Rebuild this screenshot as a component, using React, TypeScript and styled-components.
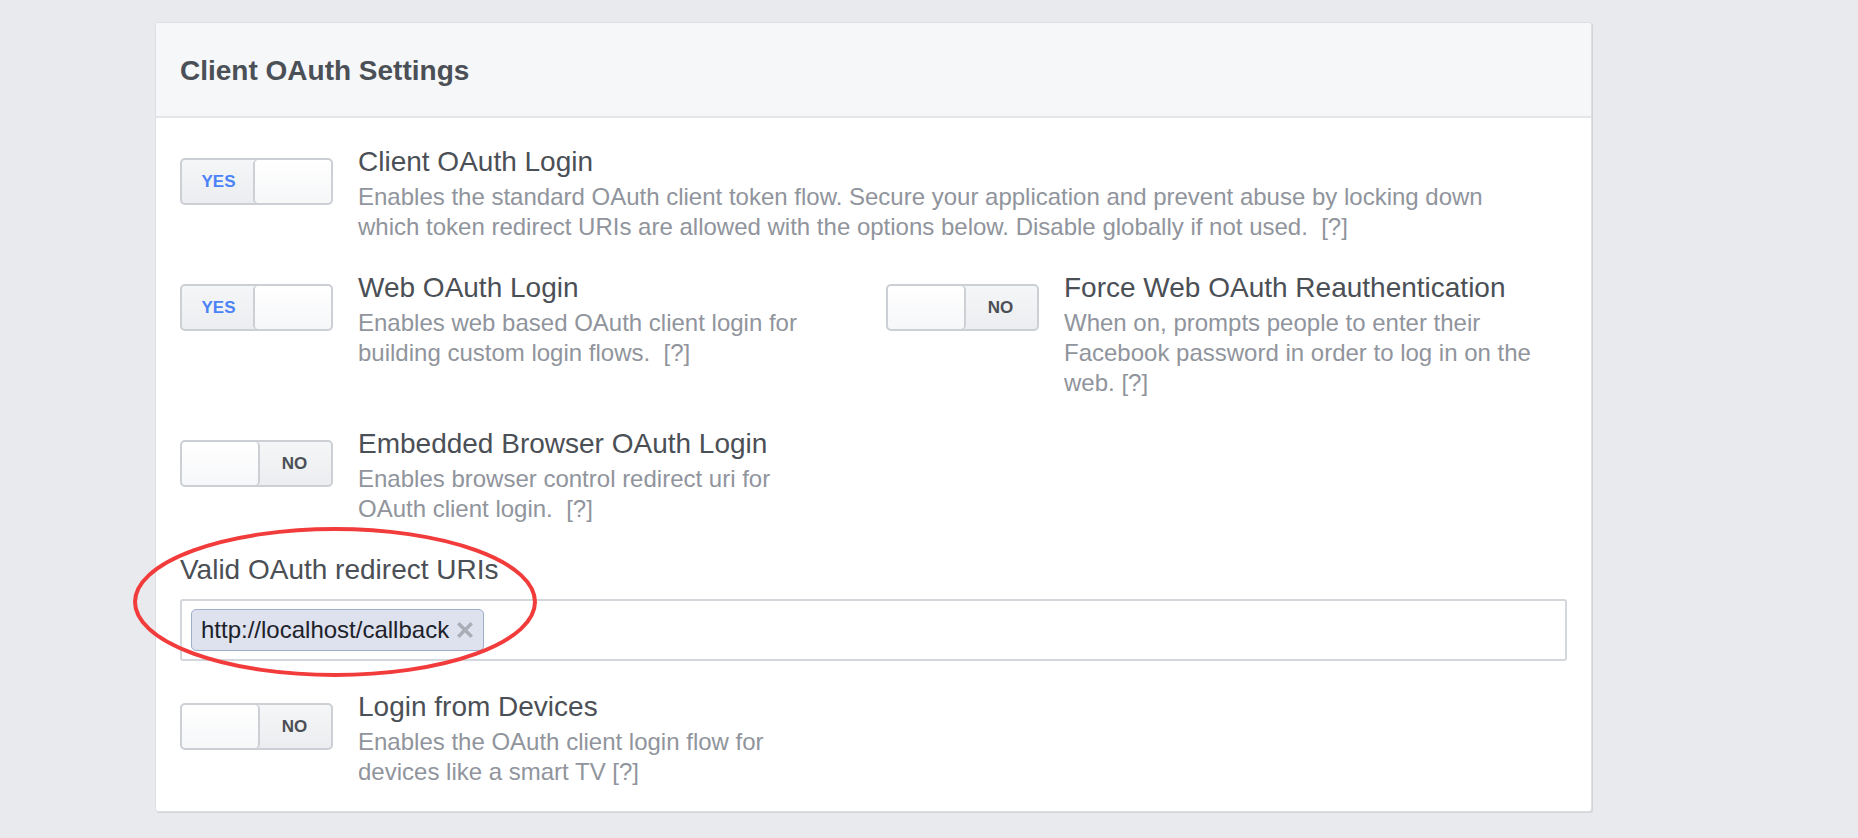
import React from "react";
import styled, { createGlobalStyle } from "styled-components";

const Global = createGlobalStyle`
  html, body { margin: 0; padding: 0; background: #e9eaed; }
  body { font-family: "Liberation Sans", Arial, Helvetica, sans-serif; }
  * { box-sizing: border-box; }
`;

const Page = styled.div`
  min-height: 838px;
  padding: 22px 0 0 155px;
`;

const Card = styled.section`
  width: 1437px;
  background: #fff;
  border: 1px solid #dddfe2;
  border-radius: 3px;
  box-shadow: 1px 1px 0 #d3d5d9;
`;

const Header = styled.header`
  background: #f6f7f9;
  border-bottom: 2px solid #e5e6e9;
  padding: 32px 24px 29px;
  border-radius: 3px 3px 0 0;
`;

const HeaderTitle = styled.h2`
  margin: 0;
  font-size: 28px;
  line-height: 32px;
  font-weight: 700;
  color: #4b4f56;
`;

const Body = styled.div`
  padding: 28px 24px 24px;
  display: grid;
  grid-template-columns: 1fr 1fr;
  column-gap: 25px;
  row-gap: 30px;
`;

const Setting = styled.div<{ $wide?: boolean }>`
  display: flex;
  align-items: flex-start;
  gap: 25px;
  grid-column: ${(p) => (p.$wide ? "1 / span 2" : "auto")};
`;

const ToggleBox = styled.div<{ $on: boolean }>`
  flex: 0 0 153px;
  height: 47px;
  margin-top: 12px;
  display: flex;
  flex-direction: ${(p) => (p.$on ? "row" : "row-reverse")};
  border: 2px solid #ccd0d5;
  border-radius: 5px;
  background: linear-gradient(#f5f6f7, #ebedf0);
  overflow: hidden;
`;

const ToggleLabel = styled.span<{ $on: boolean }>`
  flex: 1;
  display: flex;
  align-items: center;
  justify-content: center;
  font-size: 17px;
  font-weight: 700;
  color: ${(p) => (p.$on ? "#4a83f7" : "#4b4f56")};
`;

const Knob = styled.span<{ $on: boolean }>`
  flex: 0 0 76px;
  background: linear-gradient(#ffffff, #f6f7f9);
  border-radius: 4px;
  box-shadow: ${(p) => (p.$on ? "-2px 0 0 #ccd0d5" : "2px 0 0 #ccd0d5")};
`;

const Text = styled.div<{ $max: number }>`
  flex: 1;
  min-width: 0;
  max-width: ${(p) => p.$max}px;
`;

const Title = styled.div`
  font-size: 28px;
  line-height: 32px;
  color: #4b4f56;
`;

const Desc = styled.div`
  margin-top: 4px;
  font-size: 24px;
  line-height: 30px;
  color: #90949c;
`;

const Help = styled.span`
  color: #90949c;
`;

const UriField = styled.div`
  grid-column: 1 / span 2;
  position: relative;
`;

const FieldLabel = styled.div`
  font-size: 28px;
  line-height: 32px;
  color: #4b4f56;
`;

const TokenInput = styled.div`
  margin-top: 13px;
  height: 62px;
  border: 2px solid #d3d6db;
  border-radius: 3px;
  padding: 8px 9px;
  display: flex;
  align-items: flex-start;
`;

const Token = styled.span`
  display: inline-flex;
  align-items: center;
  gap: 8px;
  height: 42px;
  padding: 0 10px 0 9px;
  background: #dde2ee;
  border: 1px solid #9eaecb;
  border-radius: 5px;
  font-size: 24px;
  line-height: 40px;
  color: #1d2129;
`;

const Annotation = styled.svg`
  position: absolute;
  left: -50px;
  top: -30px;
  width: 420px;
  height: 160px;
  pointer-events: none;
  overflow: visible;
`;

type Item = {
  title: string;
  desc: React.ReactNode;
  on: boolean;
  wide?: boolean;
};

function Toggle({ on }: { on: boolean }) {
  return (
    <ToggleBox $on={on}>
      <ToggleLabel $on={on}>{on ? "YES" : "NO"}</ToggleLabel>
      <Knob $on={on} />
    </ToggleBox>
  );
}

function SettingRow({ title, desc, on, wide }: Item) {
  return (
    <Setting $wide={wide}>
      <Toggle on={on} />
      <Text $max={wide ? 1180 : 482}>
        <Title>{title}</Title>
        <Desc>{desc}</Desc>
      </Text>
    </Setting>
  );
}

export default function App() {
  return (
    <>
      <Global />
      <Page>
        <Card>
          <Header>
            <HeaderTitle>Client OAuth Settings</HeaderTitle>
          </Header>
          <Body>
            <SettingRow
              wide
              on
              title="Client OAuth Login"
              desc={
                <>
                  Enables the standard OAuth client token flow. Secure your application and prevent
                  abuse by locking down which token redirect URIs are allowed with the options below.
                  Disable globally if not used.{"\u00a0 "}
                  <Help>[?]</Help>
                </>
              }
            />
            <SettingRow
              on
              title="Web OAuth Login"
              desc={
                <>
                  Enables web based OAuth client login for building custom login flows.{"\u00a0 "}
                  <Help>[?]</Help>
                </>
              }
            />
            <SettingRow
              on={false}
              title="Force Web OAuth Reauthentication"
              desc={
                <>
                  When on, prompts people to enter their Facebook password in order to log in on the
                  web. <Help>[?]</Help>
                </>
              }
            />
            <SettingRow
              on={false}
              title="Embedded Browser OAuth Login"
              desc={
                <>
                  Enables browser control redirect uri for OAuth client login.{"\u00a0 "}
                  <Help>[?]</Help>
                </>
              }
            />
            <div />
            <UriField>
              <FieldLabel>Valid OAuth redirect URIs</FieldLabel>
              <TokenInput>
                <Token>
                  http://localhost/callback
                  <svg width="16" height="16" viewBox="0 0 16 16" aria-hidden="true">
                    <path
                      d="M2.5 2.5 L13.5 13.5 M13.5 2.5 L2.5 13.5"
                      stroke="#a9adb5"
                      strokeWidth="3.4"
                      strokeLinecap="square"
                    />
                  </svg>
                </Token>
              </TokenInput>
              <Annotation viewBox="0 0 420 160">
                <ellipse cx="205" cy="78" rx="200" ry="73" fill="none" stroke="#f23c3c" strokeWidth="4" />
              </Annotation>
            </UriField>
            <SettingRow
              on={false}
              title="Login from Devices"
              desc={
                <>
                  Enables the OAuth client login flow for devices like a smart TV <Help>[?]</Help>
                </>
              }
            />
          </Body>
        </Card>
      </Page>
    </>
  );
}
